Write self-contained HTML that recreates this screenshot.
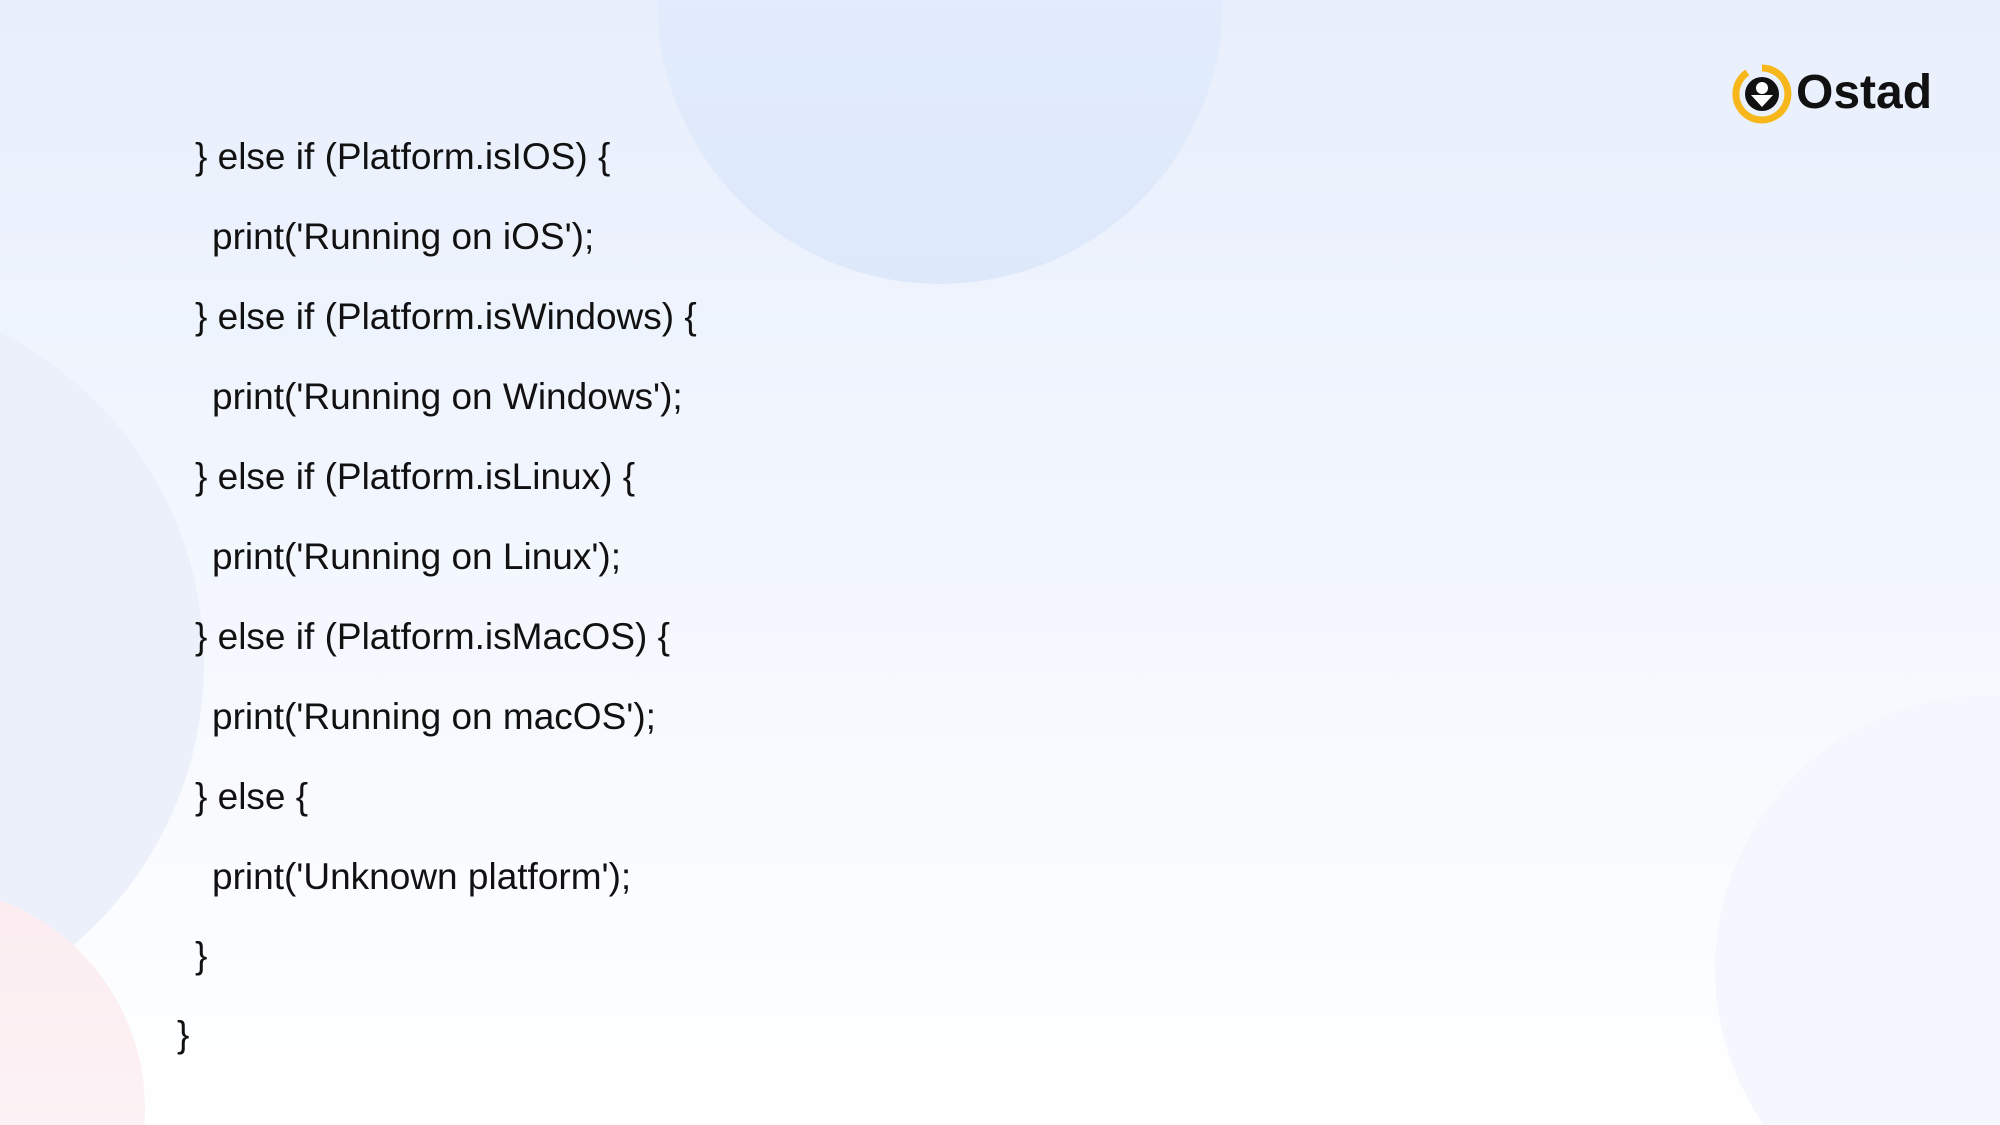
<!DOCTYPE html>
<html><head><meta charset="utf-8"><style>
html,body{margin:0;padding:0;width:2000px;height:1125px;overflow:hidden;background:#fff}
#w{width:2000px;height:1125px;overflow:hidden;position:relative;background:linear-gradient(180deg,#e8effc 0%,#f3f7fe 50%,#ffffff 100%);font-family:"Liberation Sans",sans-serif;color:#111}
.c{position:absolute;border-radius:50%}
.l{position:absolute;height:80px;line-height:80px;font-size:37px;white-space:pre}
</style></head><body><div id="w">
<div class="c" style="left:657px;top:-282px;width:566px;height:566px;background:linear-gradient(180deg,#e6eefc,#dde9fb)"></div>
<div class="c" style="left:-536px;top:293px;width:740px;height:740px;background:#ebf0fb"></div>
<div class="c" style="left:-301px;top:886px;width:446px;height:446px;background:linear-gradient(180deg,#fbecf0,#fdf7f9)"></div>
<div class="c" style="left:1715px;top:695px;width:548px;height:548px;background:#f5f7fe"></div>

<svg style="position:absolute;left:1732px;top:64px" width="60" height="60" viewBox="0 0 60 60">
<path d="M30 4 A26 26 0 1 1 8 44" fill="none" stroke="#f7b71a" stroke-width="7"/>
<path d="M8 44 A26 26 0 0 1 30 4" fill="none" stroke="#f7b71a" stroke-width="7" stroke-dasharray="40 200"/>
<circle cx="30" cy="30" r="17" fill="#111"/>
<circle cx="30" cy="24" r="6" fill="#fff"/>
<path d="M19 31 L41 31 L30 43 Z" fill="#fff"/>
</svg>
<div style="position:absolute;left:1796px;top:63px;font-size:48px;font-weight:bold;line-height:60px;color:#111">Ostad</div>

<div class="l" style="left:195px;top:117px">} else if (Platform.isIOS) {</div>
<div class="l" style="left:212px;top:197px">print('Running on iOS');</div>
<div class="l" style="left:195px;top:277px">} else if (Platform.isWindows) {</div>
<div class="l" style="left:212px;top:357px">print('Running on Windows');</div>
<div class="l" style="left:195px;top:437px">} else if (Platform.isLinux) {</div>
<div class="l" style="left:212px;top:517px">print('Running on Linux');</div>
<div class="l" style="left:195px;top:597px">} else if (Platform.isMacOS) {</div>
<div class="l" style="left:212px;top:677px">print('Running on macOS');</div>
<div class="l" style="left:195px;top:757px">} else {</div>
<div class="l" style="left:212px;top:837px">print('Unknown platform');</div>
<div class="l" style="left:195px;top:916px">}</div>
<div class="l" style="left:177px;top:995px">}</div>
</div></body></html>
